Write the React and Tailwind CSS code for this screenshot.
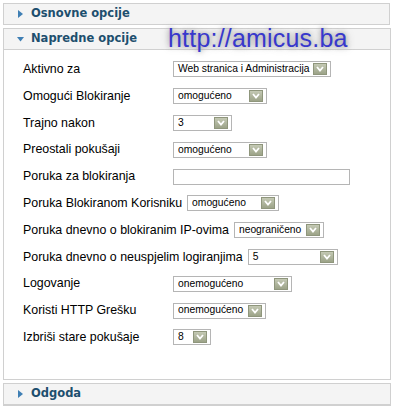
import React from 'react';

// ─── small pieces ───────────────────────────────────────────────────────────

const Arrow = ({ open }) => (
  <svg width="7" height="8" viewBox="0 0 7 8" className="shrink-0">
    {open ? (
      <polygon points="0,2 7,2 3.5,6.5" fill="#3f7fb4" />
    ) : (
      <polygon points="1,0 6,4 1,8" fill="#3f7fb4" />
    )}
  </svg>
);

const PanelHeader = ({ title, open }) => (
  <div className="flex items-center gap-[7px] h-[21px] pl-[13px] bg-[#f4f4f4] border-b border-[#d0d0d0]">
    <Arrow open={open} />
    <span
      className="text-[11.5px] font-bold text-[#1d4f6e] tracking-[0px]"
      style={{ fontFamily: '"DejaVu Sans", Verdana, sans-serif' }}
    >
      {title}
    </span>
  </div>
);

const Select = ({ value, width }) => (
  <div
    className="relative h-[16px] border border-[#b5b5b5] bg-white flex items-center pl-[4px] text-[10.3px] text-black overflow-hidden whitespace-nowrap"
    style={{ width, fontFamily: '"Liberation Sans", Arial, sans-serif' }}
  >
    <span className="leading-none">{value}</span>
    <span className="absolute right-[3px] top-[1px] w-[14px] h-[12px] bg-gradient-to-b from-[#c4c9b4] to-[#9ca388] border border-[#8f967c] flex items-center justify-center">
      <svg width="8" height="6" viewBox="0 0 8 6">
        <polyline points="1,1 4,4.5 7,1" fill="none" stroke="#fff" strokeWidth="1.8" />
      </svg>
    </span>
  </div>
);

const Row = ({ label, children }) => (
  <div className="flex items-center h-[26.8px]">
    <span
      className="min-w-[145px] mr-[5px] text-[12.4px] text-black whitespace-nowrap"
      style={{ fontFamily: '"Liberation Sans", Arial, sans-serif' }}
    >
      {label}
    </span>
    {children}
  </div>
);

// ─── page ───────────────────────────────────────────────────────────────────

const rows = [
  ['Aktivno za', 'Web stranica i Administracija', 158],
  ['Omogući Blokiranje', 'omogućeno', 94],
  ['Trajno nakon', '3', 59],
  ['Preostali pokušaji', 'omogućeno', 94],
  ['Poruka za blokiranja', null, 177],
  ['Poruka Blokiranom Korisniku', 'omogućeno', 92],
  ['Poruka dnevno o blokiranim IP-ovima', 'neograničeno', 90],
  ['Poruka dnevno o neuspjelim logiranjima', '5', 90],
  ['Logovanje', 'onemogućeno', 119],
  ['Koristi HTTP Grešku', 'onemogućeno', 93],
  ['Izbriši stare pokušaje', '8', 38],
];

export default function App() {
  return (
    <div
      className="w-[393px] h-[407px] bg-white pt-[3px] pl-[3px] pr-[3px] overflow-hidden"
      style={{ fontFamily: '"Liberation Sans", Arial, sans-serif' }}
    >
      {/* Osnovne opcije */}
      <div className="border border-[#d0d0d0] border-b-0 w-[387px]">
        <PanelHeader title="Osnovne opcije" />
      </div>

      {/* Napredne opcije */}
      <div className="relative mt-[3px] border border-[#d0d0d0] w-[388px]">
        <PanelHeader title="Napredne opcije" open />
        <span
          className="absolute left-[164px] top-[-9px] text-[25px] tracking-[0.2px] text-[#3838cc]"
          style={{
            fontFamily: '"Liberation Sans", Arial, sans-serif',
            textShadow: '0 0 5px #999999, 0 0 10px #bbbbbb',
          }}
        >
          http://amicus.ba
        </span>

        <div className="pl-[19px] pt-[6px] pb-[28px] bg-white">
          {rows.map(([label, value, width]) => (
            <Row key={label} label={label}>
              {value === null ? (
                <div className="h-[16px] border border-[#b5b5b5]" style={{ width }} />
              ) : (
                <Select value={value} width={width} />
              )}
            </Row>
          ))}
        </div>
      </div>

      {/* Odgoda */}
      <div className="mt-[3px] border border-[#d0d0d0] w-[388px]">
        <PanelHeader title="Odgoda" />
      </div>
    </div>
  );
}
